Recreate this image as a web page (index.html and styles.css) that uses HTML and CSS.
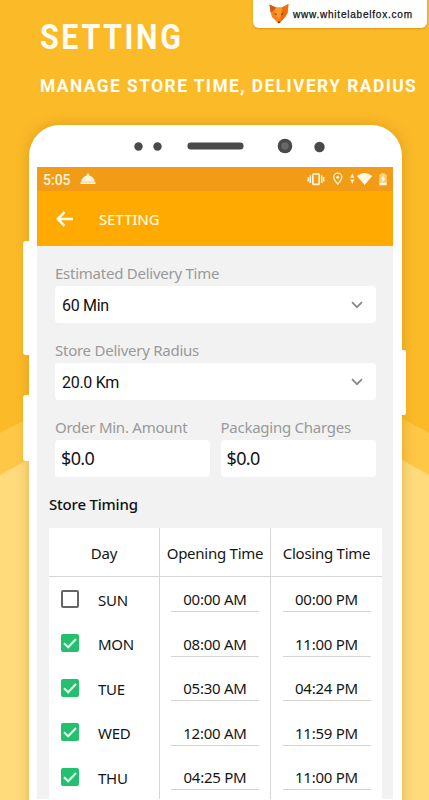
FILE: index.html
```
<!DOCTYPE html>
<html lang="en">
<head>
<meta charset="utf-8">
<title>Setting</title>
<link rel="stylesheet" href="styles.css">
</head>
<body>
<div class="page">
  <svg class="backdrop" viewBox="0 0 429 800" aria-hidden="true">
    <path d="M0 433L215 319L429 433V800H0Z" fill="#ffc746"/>
    <path d="M0 475L215 355L429 475V800H0Z" fill="#ffdb7b"/>
  </svg>
  <div class="site">
    <svg class="fox" viewBox="0 0 20 20" aria-hidden="true">
      <path d="M.5 .5L7 3.500H13L19.500 0L18.500 9L16 13L11 19H9L3 13L1.500 8Z" fill="#f5821f"/>
      <path d="M.5 .5L7 3.500L4.500 7L1.500 8Z" fill="#cf591c"/>
      <path d="M19.500 0L13 3.500L11 18.500L16 13L18.500 9Z" fill="#f26b0a"/>
      <path d="M7 3.500H13L12 11L10 15L5 8Z" fill="#fb9827"/>
      <path d="M5 8.500L8 10.500L7 11ZM15 8.500L12 10.500L13 11ZM9 17.500H11L10.300 19.300H9.500Z" fill="#4a1c0a"/>
    </svg>
    <span class="url">www.whitelabelfox.com</span>
  </div>
  <header class="hero">
    <h1>SETTING</h1>
    <p>MANAGE STORE TIME, DELIVERY RADIUS</p>
  </header>

  <main class="phone">
    <i class="key key-volume"></i><i class="key key-power"></i><i class="key key-side"></i>
    <svg class="sensors" viewBox="0 0 373 42" aria-hidden="true">
      <g fill="#4a494b"><circle cx="109.5" cy="21.5" r="4.2"/><circle cx="128.5" cy="21.5" r="4.2"/>
      <rect x="158.5" y="17.5" width="56" height="7" rx="3.2"/><circle cx="256" cy="21" r="7.3"/><circle cx="290.5" cy="22" r="5.2"/></g>
      <circle cx="256" cy="21" r="3.7" fill="#68676a"/>
    </svg>
    <div class="screen">
      <div class="status">
        <span class="clock">5:05</span>
        <svg class="dish" viewBox="0 0 16 12" aria-hidden="true"><path d="M1.2 8.8C1.600 5 4 2.900 6.800 2.400a1.300 1.300 0 1 1 2.400 0C12 2.900 14.400 5 14.800 8.800ZM.5 9.300h15v1.800H.5Z" fill="#fff8df"/></svg>
        <svg class="tray" viewBox="0 0 82 16" aria-hidden="true">
          <g fill="none" stroke="#fff6dc">
            <rect x="5.800" y="3" width="6.400" height="10.400" rx=".8" stroke-width="1.700"/>
            <path d="M3.300 4.500v7.400M1.300 6v4.400M14.700 4.500v7.400M16.700 6v4.400" stroke-width="1.500"/>
            <path d="M30.800 13.200C28 9.800 26.700 8 26.700 6.300a4.100 4.100 0 0 1 8.200 0C34.900 8 33.600 9.800 30.800 13.200Z" stroke-width="1.300"/>
          </g>
          <g fill="#fff9e6"><circle cx="30.800" cy="6.300" r="1.500"/><path d="M43.200 6.800L45.300 2.500L47.400 6.800ZM43.200 8.500H47.400L45.300 12.700Z"/>
          <path d="M50 5Q57.600-1 65.200 5L57.600 14Z"/>
          <path d="M72.300 11.300h7.400v3h-7.400Z"/></g>
          <path d="M72.300 3.300h2V2h3.400v1.300h2v8h-7.400Z" fill="#ffcf78"/>
          <path d="M77 4L74 8h1.800L75 11.500L78.200 7.300H76.500Z" fill="#fff"/>
        </svg>
      </div>
      <div class="appbar">
        <svg class="back" viewBox="0 0 18 16" aria-hidden="true"><path d="M17 8H2M8.500 1.200L1.800 8l6.700 6.800" fill="none" stroke="#fffbe9" stroke-width="2.500"/></svg>
        <span>SETTING</span>
      </div>
      <section class="form">
        <label><span class="est">Estimated Delivery Time</span><div class="box select"><b>60 Min</b><svg viewBox="0 0 12 8"><path d="M1 1.200L6 6.200L11 1.200"/></svg></div></label>
        <label><span class="rad">Store Delivery Radius</span><div class="box select"><b>20.0 Km</b><svg viewBox="0 0 12 8"><path d="M1 1.200L6 6.200L11 1.200"/></svg></div></label>
        <div class="pair">
          <label><span class="ord">Order Min. Amount</span><div class="box money">$0.0</div></label>
          <label><span class="pack">Packaging Charges</span><div class="box money">$0.0</div></label>
        </div>
      </section>
      <h2>Store Timing</h2>
      <section class="table">
        <div class="row head"><div>Day</div><div>Opening Time</div><div>Closing Time</div></div>
        <div class="row"><div class="day"><i class="check"></i>SUN</div><div><span class="time">00:00 AM</span></div><div><span class="time">00:00 PM</span></div></div>
        <div class="row"><div class="day"><i class="check on"><svg viewBox="0 0 18 18"><path d="M3 9.300L7.200 13.300L15 5"/></svg></i>MON</div><div><span class="time">08:00 AM</span></div><div><span class="time">11:00 PM</span></div></div>
        <div class="row"><div class="day"><i class="check on"><svg viewBox="0 0 18 18"><path d="M3 9.300L7.200 13.300L15 5"/></svg></i>TUE</div><div><span class="time">05:30 AM</span></div><div><span class="time">04:24 PM</span></div></div>
        <div class="row"><div class="day"><i class="check on"><svg viewBox="0 0 18 18"><path d="M3 9.300L7.200 13.300L15 5"/></svg></i>WED</div><div><span class="time">12:00 AM</span></div><div><span class="time">11:59 PM</span></div></div>
        <div class="row"><div class="day"><i class="check on"><svg viewBox="0 0 18 18"><path d="M3 9.300L7.200 13.300L15 5"/></svg></i>THU</div><div><span class="time">04:25 PM</span></div><div><span class="time">11:00 PM</span></div></div>
      </section>
    </div>
  </main>
</div>
</body>
</html>
```
FILE: styles.css
```
* { box-sizing: border-box; }
body { margin: 0; font-family: "Noto Sans", sans-serif; }
.page { position: relative; width: 429px; height: 800px; overflow: hidden; background: #fbba28; }
.backdrop { position: absolute; inset: 0; width: 429px; height: 800px; }
.site { position: absolute; left: 253px; top: -8px; width: 174px; height: 36px; padding: 8px 0 0 16px; border-radius: 6px; background: #fff; box-shadow: 0 1px 2px #c9780088; display: flex; align-items: center; gap: 4px; }
.fox { width: 20px; height: 20px; flex: none; }
.url { font: 10px/14px "Liberation Sans", sans-serif; color: #111; letter-spacing: .78px; -webkit-text-stroke: .25px #111; white-space: nowrap; padding-top: 1px; }
.hero { position: relative; height: 125px; padding: 17px 0 0 40px; color: #fffdf3; font-family: Roboto, sans-serif; white-space: nowrap; }
.hero h1 { margin: 0; font-size: 35px; line-height: 42px; font-weight: 700; letter-spacing: 3px; transform: scaleX(.87); transform-origin: 0 0; }
.hero p { margin: 16px 0 0; font-size: 18px; line-height: 22px; font-weight: 700; letter-spacing: 1.5px; transform: scaleX(.965); transform-origin: 0 0; }

.phone { position: relative; width: 373px; height: 720px; margin-left: 29px; padding: 0 9px 0 8px; border-radius: 31px 31px 0 0; background: #fff; box-shadow: 0 0 14px #9b690055; }
.key { position: absolute; background: #fff; }
.key-volume { left: -6px; top: 116px; width: 7px; height: 114px; border-radius: 3px 0 0 3px; }
.key-power { left: -6px; top: 270px; width: 7px; height: 66px; border-radius: 3px 0 0 3px; }
.key-side { right: -4px; top: 225px; width: 5px; height: 65px; border-radius: 0 2px 2px 0; }
.sensors { display: block; width: 373px; height: 42px; margin-left: -8px; }
.screen { width: 356px; background: #f2f2f2; }
.status { height: 24px; background: #f29b17; display: flex; align-items: center; padding: 0 4px 0 6px; }
.clock { width: 28px; font: 500 14px/24px Roboto, sans-serif; color: #fff5d9; padding-top: 1px; }
.dish { width: 16px; height: 12px; margin-left: 9px; }
.tray { width: 82px; height: 16px; margin-left: auto; }
.appbar { height: 55px; background: #fa0; display: flex; align-items: center; padding: 1px 0 0 19px; font-size: 15px; letter-spacing: -.15px; font-weight: 500; color: #fff6dc; }
.back { width: 18px; height: 16px; margin-right: 25px; }

.form { padding: 18px 17.5px 0 18px; height: 231px; }
.form label { display: block; height: 77px; }
.form label > span { display: block; height: 21.5px; font-size: 15px; line-height: 19px; letter-spacing: -.25px; color: #999; white-space: nowrap; }
.box { height: 37.5px; border-radius: 4px; background: #fff; display: flex; align-items: center; justify-content: space-between; padding: 0 13px 0 7px; }
.box b { font: 400 16px/20px Roboto, sans-serif; letter-spacing: -.3px; color: #111; padding-top: 3px; }
.box svg { width: 12px; height: 8px; margin-top: 1px; fill: none; stroke: #888; stroke-width: 1.7; }
.box.money { padding-left: 6px; font-size: 18px; letter-spacing: -.65px; color: #151515; }
.pair { display: grid; grid-template-columns: 155px 155px; justify-content: space-between; }
h2 { margin: 17px 0 0 12px; height: 33.500px; font-size: 15px; letter-spacing: -.2px; line-height: 20px; font-weight: 500; color: #111; }
.table { width: 333px; margin-left: 12px; background: #fff; color: #151515; font-size: 15px; letter-spacing: -.25px; }
.row { display: grid; grid-template-columns: 111px 111px 111px; height: 44.500px; }
.row > div { display: flex; align-items: center; justify-content: center; white-space: nowrap; }
.row > div:not(:last-child) { border-right: 1px solid #d6d6d6; }
.head { height: 49px; border-bottom: 1px solid #d6d6d6; }
.head > div { padding-top: 2px; }
.row > .day { justify-content: flex-start; padding: 2px 0 0 12px; }
.check { width: 18px; height: 18px; margin-right: 19px; border: 2px solid #666; border-radius: 2px; flex: none; position: relative; top: -1px; }
.check.on { border: 0; background: #25bf70; }
.check svg { display: block; width: 18px; height: 18px; fill: none; stroke: #e0ffed; stroke-width: 2; }
.time { width: 88px; height: 24px; margin-top: 3px; border-bottom: 1px solid #d4d4d4; line-height: 23px; text-align: center; }
```
